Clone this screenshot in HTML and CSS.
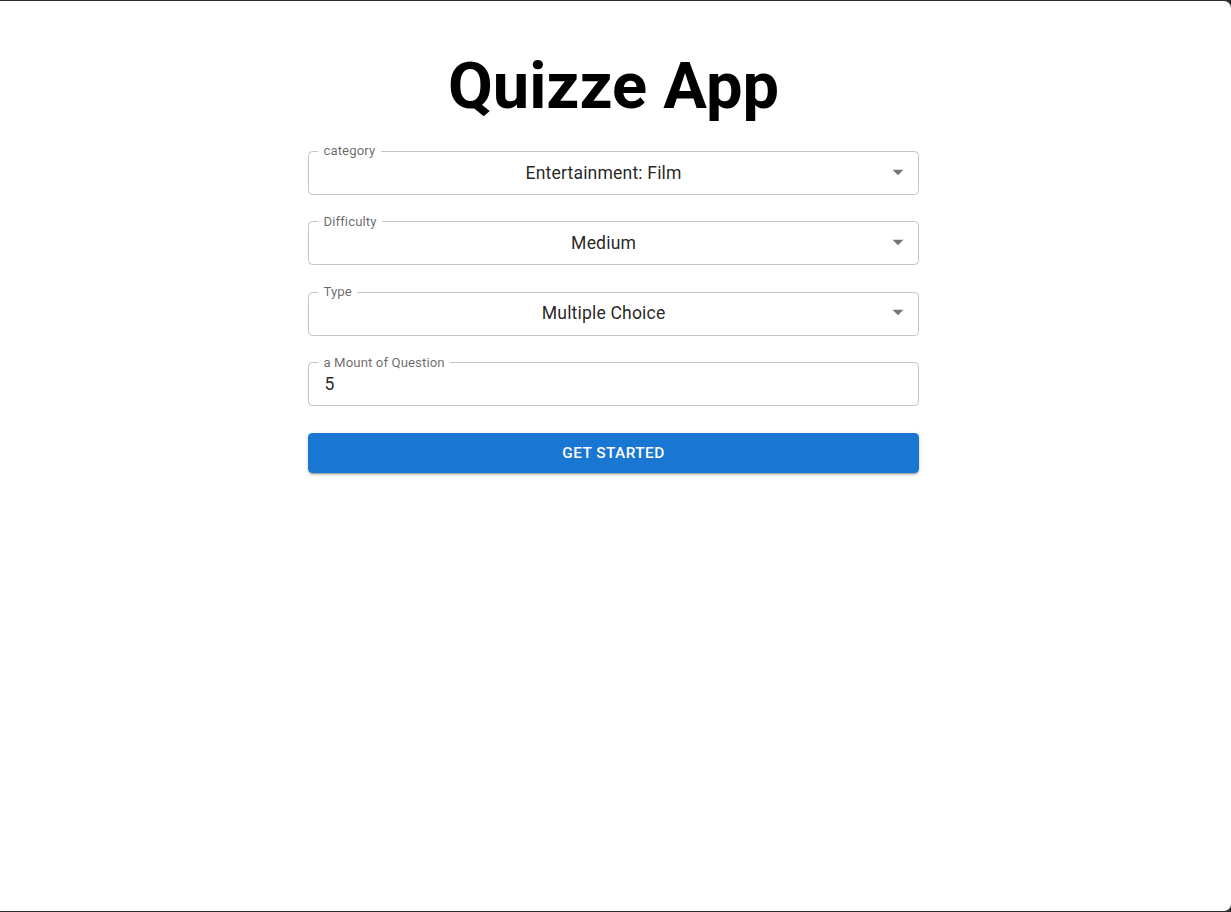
FILE: index.html
```html
<!DOCTYPE html>
<html lang="en">
<head>
<meta charset="utf-8">
<title>Quizze App</title>
<link rel="stylesheet" href="styles.css">
</head>
<body>
<main class="page">
  <h1 class="title">Quizze App</h1>
  <form class="form">
    <div class="field select">
      <span class="label">category</span>
      <div class="value">Entertainment: Film</div>
      <svg class="arrow" viewBox="0 0 24 24" width="26" height="26"><path d="M7 10l5 5 5-5z"/></svg>
    </div>
    <div class="field select">
      <span class="label">Difficulty</span>
      <div class="value">Medium</div>
      <svg class="arrow" viewBox="0 0 24 24" width="26" height="26"><path d="M7 10l5 5 5-5z"/></svg>
    </div>
    <div class="field select">
      <span class="label">Type</span>
      <div class="value">Multiple Choice</div>
      <svg class="arrow" viewBox="0 0 24 24" width="26" height="26"><path d="M7 10l5 5 5-5z"/></svg>
    </div>
    <div class="field text">
      <span class="label">a Mount of Question</span>
      <div class="value">5</div>
    </div>
    <button type="button" class="btn">Get Started</button>
  </form>
</main>
</body>
</html>
```

FILE: styles.css
```css
html {
  background: #2b2b2b;
  height: 100%;
}
body {
  margin: 1px 0;
  height: 910px;
  background: #ffffff;
  border-radius: 0 7px 7px 0;
  font-family: Roboto, "Liberation Sans", Arial, sans-serif;
  color: rgba(0, 0, 0, 0.87);
}
.page {
  padding: 46px 4px 0 0;
  display: flex;
  flex-direction: column;
  align-items: center;
}
.title {
  margin: 0 0 26px;
  font-size: 65px;
  line-height: 1.2;
  font-weight: 700;
  color: #000;
}
.form {
  width: 611px;
  display: flex;
  flex-direction: column;
  gap: 26.4px;
}
.field {
  position: relative;
  box-sizing: border-box;
  height: 44px;
  border: 1px solid #c4c4c4;
  border-radius: 4.4px;
  display: flex;
  align-items: center;
  padding: 0 15.4px;
}
.field.select {
  padding-right: 35.2px;
}
.label {
  position: absolute;
  top: -7.6px;
  left: 8.9px;
  padding: 0 5.5px;
  background: #fff;
  font-size: 13.2px;
  line-height: 13.2px;
  color: rgba(0, 0, 0, 0.6);
  letter-spacing: 0.1px;
}
.value {
  flex: 1;
  font-size: 17.6px;
  line-height: 25px;
  letter-spacing: 0.16px;
}
.select .value {
  text-align: center;
}
.arrow {
  position: absolute;
  right: 7px;
  top: 6.5px;
  fill: rgba(0, 0, 0, 0.54);
}
.btn {
  height: 40px;
  border: 0;
  border-radius: 4.4px;
  background: #1976d2;
  color: #fff;
  font-family: inherit;
  font-size: 15.4px;
  font-weight: 500;
  letter-spacing: 0.44px;
  text-transform: uppercase;
  box-shadow: 0 3px 1px -2px rgba(0,0,0,0.2), 0 2px 2px 0 rgba(0,0,0,0.14), 0 1px 5px 0 rgba(0,0,0,0.12);
  cursor: pointer;
}
```
